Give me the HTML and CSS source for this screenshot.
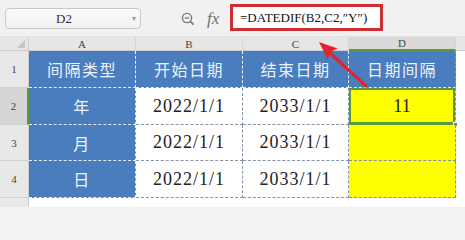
FILE: index.html
```html
<!DOCTYPE html>
<html lang="zh">
<head>
<meta charset="utf-8">
<link rel="stylesheet" href="styles.css">
</head>
<body>
<div class="app">
  <div class="toolbar">
    <div class="namebox"><span class="ref">D2</span><span class="caret">▾</span></div>
    <svg class="zoomicon" width="14" height="14" viewBox="0 0 14 14">
      <circle cx="6" cy="6" r="4.6" fill="none" stroke="#7a7a7a" stroke-width="1.4"/>
      <line x1="3.8" y1="6" x2="8.2" y2="6" stroke="#7a7a7a" stroke-width="1.3"/>
      <line x1="9.4" y1="9.4" x2="12.6" y2="12.6" stroke="#7a7a7a" stroke-width="1.6"/>
    </svg>
    <span class="fx">fx</span>
    <div class="formula">=DATEDIF(B2,C2,″Y″)</div>
  </div>
  <div class="sheet">
    <div class="corner"><span class="tri"></span></div>
    <div class="colhead">A</div>
    <div class="colhead">B</div>
    <div class="colhead">C</div>
    <div class="colhead active">D</div>
    <div class="colfill"></div>

    <div class="rowhead">1</div>
    <div class="cell blue">间隔类型</div>
    <div class="cell blue">开始日期</div>
    <div class="cell blue">结束日期</div>
    <div class="cell blue last">日期间隔</div>
    <div class="fill"></div>

    <div class="rowhead active">2</div>
    <div class="cell blue">年</div>
    <div class="cell num">2022/1/1</div>
    <div class="cell num">2033/1/1</div>
    <div class="cell num yellow selected">11<span class="handle"></span></div>
    <div class="fill"></div>

    <div class="rowhead">3</div>
    <div class="cell blue">月</div>
    <div class="cell num">2022/1/1</div>
    <div class="cell num">2033/1/1</div>
    <div class="cell yellow"></div>
    <div class="fill"></div>

    <div class="rowhead">4</div>
    <div class="cell blue">日</div>
    <div class="cell num">2022/1/1</div>
    <div class="cell num">2033/1/1</div>
    <div class="cell yellow"></div>
    <div class="fill"></div>

    <div class="rowhead blank"></div>
    <div class="fill"></div>
    <div class="fill"></div>
    <div class="fill"></div>
    <div class="fill"></div>
    <div class="fill"></div>
  </div>
  <svg class="arrow" width="465" height="207" viewBox="0 0 465 207">
    <line x1="366" y1="86" x2="330" y2="53" stroke="#e0262c" stroke-width="3.2" stroke-linecap="round"/>
    <polygon points="319,42 337.5,48.5 329.5,52.5 328,60" fill="#e0262c"/>
  </svg>
</div>
</body>
</html>
```
FILE: styles.css
```css
html, body {
  margin: 0;
  padding: 0;
}
body {
  width: 465px;
  height: 207px;
  overflow: hidden;
  background: #f2f2f2;
  font-family: "Liberation Serif", serif;
}
.app {
  position: relative;
  width: 465px;
  height: 207px;
}
.toolbar {
  height: 37px;
  display: flex;
  align-items: flex-start;
  background: #f1f1f1;
  box-sizing: border-box;
  border-bottom: 1px solid #e2e2e2;
}
.namebox {
  margin-top: 8px;
  margin-left: 5px;
  width: 136px;
  height: 21px;
  box-sizing: border-box;
  border: 1px solid #c9c9c9;
  border-radius: 4px;
  background: linear-gradient(#fbfbfb, #f0f0f0);
  display: flex;
  align-items: center;
  position: relative;
}
.ref {
  flex: 1;
  text-align: center;
  font-size: 13px;
  color: #333;
  padding-right: 10px;
}
.caret {
  font-size: 8px;
  color: #999;
  margin-right: 4px;
}
.zoomicon {
  margin-top: 12px;
  margin-left: 40px;
}
.fx {
  margin-top: 9px;
  margin-left: 12px;
  font-style: italic;
  font-size: 17px;
  color: #6f6f6f;
  width: 17px;
}
.formula {
  margin-top: 4px;
  margin-left: 6px;
  width: 153px;
  height: 27px;
  box-sizing: border-box;
  border: 3px solid #cc2e33;
  background: #ffffff;
  font-size: 13px;
  line-height: 21px;
  padding-left: 7px;
  color: #111;
  white-space: nowrap;
}
.sheet {
  display: grid;
  grid-template-columns: 29px 107px 107px 106px 107px 1fr;
  grid-template-rows: 14px 37px 37px 36px 37px 1fr;
  height: 170px;
  background: #ffffff;
}
.corner {
  background: #e6e6e6;
  border-bottom: 1px solid #cfcfcf;
  border-right: 1px solid #cfcfcf;
  box-sizing: border-box;
  position: relative;
}
.tri {
  position: absolute;
  right: 3px;
  bottom: 2px;
  width: 0;
  height: 0;
  border-left: 8px solid transparent;
  border-bottom: 8px solid #c4c4c4;
}
.colhead {
  background: #e6e6e6;
  border-bottom: 1px solid #cfcfcf;
  border-right: 1px solid #d6d6d6;
  box-sizing: border-box;
  font-size: 11px;
  color: #444;
  text-align: center;
  line-height: 14px;
}
.colhead.active {
  background: #dadada;
  border-bottom: 2px solid #5a9a3a;
  line-height: 13px;
}
.colfill {
  background: #e6e6e6;
  border-bottom: 1px solid #cfcfcf;
}
.rowhead {
  background: #e8e8e8;
  border-bottom: 1px solid #d2d2d2;
  border-right: 1px solid #cdcdcd;
  box-sizing: border-box;
  font-size: 11px;
  color: #444;
  display: flex;
  align-items: center;
  justify-content: center;
}
.rowhead.active {
  background: #d6d6d6;
  border-right: 2px solid #5a9a3a;
}
.rowhead.blank {
  border-bottom: none;
}
.cell {
  box-sizing: border-box;
  display: flex;
  align-items: center;
  justify-content: center;
  border-right: 1px dashed #8493a8;
  border-bottom: 1px dashed #8493a8;
  position: relative;
}
.cell.blue {
  background: #4a7dbd;
  color: #eef3fb;
  font-family: "Noto Sans CJK SC", "Noto Sans", sans-serif;
  font-size: 16px;
  letter-spacing: 1.5px;
  border-right: 1px dashed #e9eef7;
  border-bottom: 1px dashed #e9eef7;
}
.cell.blue.last {
  border-right: 1px dashed #8493a8;
}
.cell.num {
  font-size: 18px;
  color: #222;
  letter-spacing: 1px;
}
.cell.yellow {
  background: #ffff00;
}
.cell.selected {
  box-shadow: inset 0 0 0 2px #5a9a3a;
  border-bottom: 1px solid #5a9a3a;
  letter-spacing: 0;
}
.handle {
  position: absolute;
  right: -3px;
  bottom: -3px;
  width: 5px;
  height: 5px;
  background: #5a9a3a;
  border: 1px solid #ffffff;
  box-sizing: border-box;
}
.fill {
  background: #ffffff;
}
.arrow {
  position: absolute;
  left: 0;
  top: 0;
  pointer-events: none;
}
```
